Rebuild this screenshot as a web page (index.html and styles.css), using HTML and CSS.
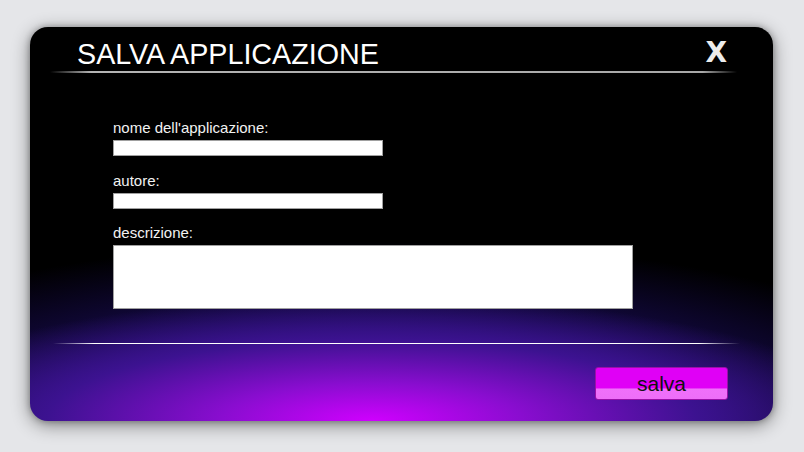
FILE: index.html
```html
<!DOCTYPE html>
<html>
<head>
<meta charset="utf-8">
<link rel="stylesheet" href="styles.css">
</head>
<body>
<div class="dialog">
  <div class="header">
    <h1 class="title">SALVA APPLICAZIONE</h1>
    <span class="close">X</span>
  </div>
  <div class="rule rule-top"></div>
  <form class="form">
    <label class="label">nome dell'applicazione:</label>
    <input class="field" type="text">
    <label class="label">autore:</label>
    <input class="field" type="text">
    <label class="label">descrizione:</label>
    <textarea class="area"></textarea>
  </form>
  <div class="rule rule-bottom"></div>
  <div class="footer">
    <button class="btn" type="button">salva</button>
  </div>
</div>
</body>
</html>
```
FILE: styles.css
```css
html, body {
  margin: 0;
  padding: 0;
  background: #e5e6e9;
  width: 804px;
  height: 452px;
  overflow: hidden;
  font-family: "Liberation Sans", Arial, sans-serif;
}
.dialog {
  margin: 27px 0 0 30px;
  width: 743px;
  height: 394px;
  border-radius: 18px;
  box-sizing: border-box;
  display: flex;
  flex-direction: column;
  background:
    radial-gradient(ellipse 500px 125px at 46% 100%, #d000ff 0%, #8a0dd0 30%, #3c1290 65%, rgba(20,10,70,0) 100%),
    radial-gradient(ellipse 620px 180px at 46% 100%, #2a1080 0%, #1a0c5a 50%, rgba(0,0,0,0) 100%),
    #000;
  box-shadow: 0 4px 18px rgba(0,0,0,0.45), 0 0 6px rgba(0,0,0,0.3);
}
.header {
  display: flex;
  align-items: flex-end;
  justify-content: space-between;
  height: 44px;
  padding: 0 46px 0 47px;
}
.title {
  margin: 0;
  font-weight: normal;
  font-size: 28.7px;
  line-height: 29px;
  color: #fff;
  padding-bottom: 2px;
}
.close {
  font-family: "DejaVu Sans", sans-serif;
  font-size: 28px;
  font-weight: bold;
  color: #ececec;
  line-height: 28px;
  padding-bottom: 4px;
}
.rule {
  height: 1px;
  flex: none;
}
.rule-top {
  margin: 0 36px 0 20px;
  height: 2px;
  background: linear-gradient(to right, rgba(160,160,160,0) 0%, #b4b4b4 6%, #a8a8a8 95%, rgba(160,160,160,0) 100%);
}
.form {
  display: flex;
  flex-direction: column;
  align-items: flex-start;
  padding: 46px 0 34px 83px;
  margin: 0;
  flex: none;
}
.label {
  font-size: 15px;
  line-height: 17px;
  color: #f2f2f2;
  margin-bottom: 4px;
}
.field {
  width: 270px;
  height: 16px;
  box-sizing: border-box;
  border: 1px solid #a0a0a0;
  background: #fff;
  margin: 0 0 15.5px 0;
  padding: 0;
  flex: none;
}
.area {
  width: 520px;
  height: 64px;
  box-sizing: border-box;
  border: 1px solid #a0a0a0;
  background: #fff;
  margin: 0;
  padding: 0;
  resize: none;
  flex: none;
  display: block;
}
.rule-bottom {
  margin: 0 33px 0 23px;
  height: 1px;
  background: linear-gradient(to right, rgba(255,255,255,0) 0%, #fff 6%, #fff 94%, rgba(255,255,255,0) 100%);
}
.footer {
  display: flex;
  justify-content: flex-end;
  padding: 23px 45px 0 0;
}
.btn {
  width: 133px;
  height: 33px;
  box-sizing: border-box;
  border: 1px solid #9a10a8;
  border-radius: 3px;
  background: linear-gradient(to bottom, #e000f6 0%, #e000f6 64%, #f070fa 68%, #ee6ef8 100%);
  font-family: "Liberation Sans", Arial, sans-serif;
  font-size: 21px;
  color: #111;
  padding: 0;
  line-height: 30px;
}
```
